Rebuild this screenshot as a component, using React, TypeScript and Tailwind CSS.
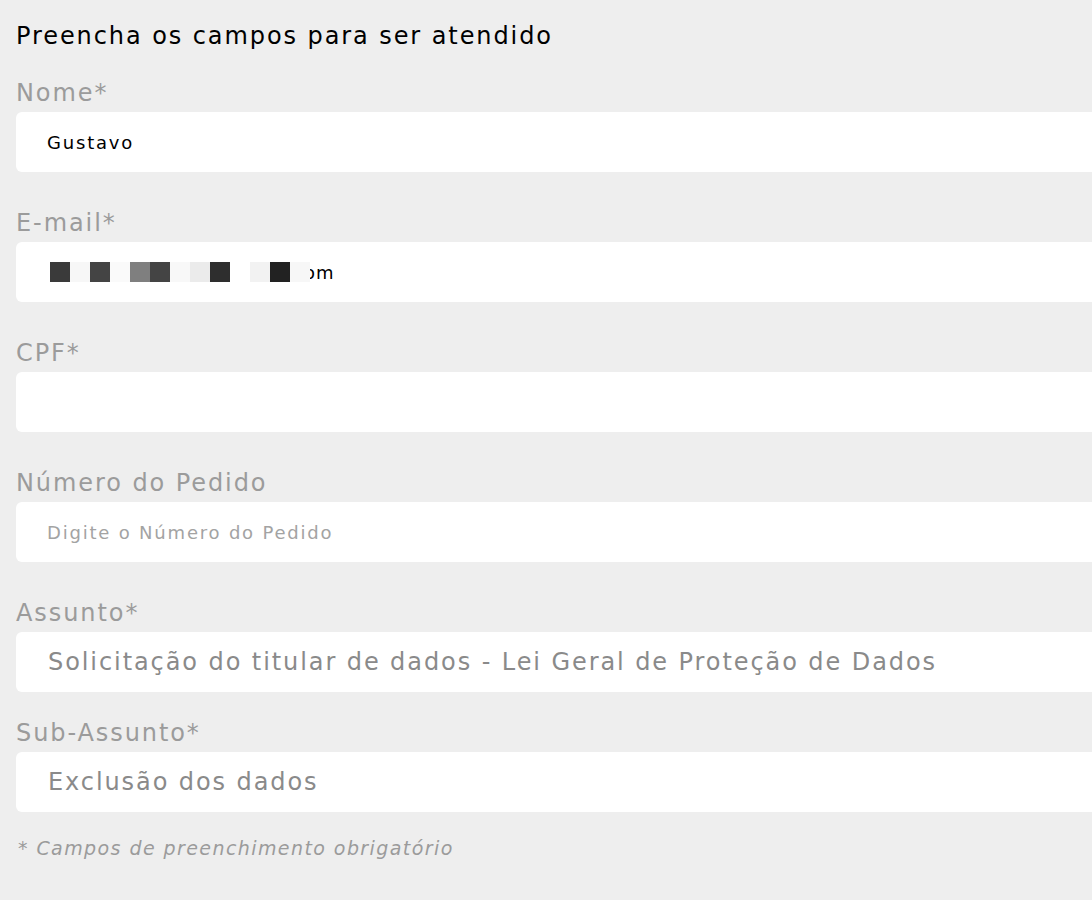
const font = { fontFamily: '"DejaVu Sans", "Liberation Sans", sans-serif' };

const emailBlocks = [
  '#3a3a3a', '#f7f7f7', '#444444', '#fafafa', '#7f7f7f', '#444444', '#f8f8f8',
  '#ebebeb', '#2e2e2e', '#ffffff', '#f2f2f2', '#222222', '#f7f7f7',
];

const Label = ({ children }: { children: React.ReactNode }) => (
  <label className="block text-[24px] leading-[27px] pb-[5px] tracking-[0.08em] text-[#9b9b9b]">
    {children}
  </label>
);

const Field = ({ children }: { children?: React.ReactNode }) => (
  <div className="h-[60px] bg-white rounded-md flex items-center">{children}</div>
);

export default function App() {
  return (
    <div className="min-h-screen w-full overflow-hidden bg-[#eeeeee]" style={font}>
      <form className="w-[1120px] pl-4 pt-[20px]">
        <h2 className="text-[24px] leading-[32px] tracking-[0.08em] text-black">
          Preencha os campos para ser atendido
        </h2>

        <div className="mt-[28px]">
          <Label>Nome*</Label>
          <Field>
            <span className="pl-[31px] text-[18px] tracking-[0.1em] text-black">Gustavo</span>
          </Field>
        </div>

        <div className="mt-[38px]">
          <Label>E-mail*</Label>
          <Field>
            <div className="flex items-center pl-[34px]">
              <div className="flex relative z-10">
                {emailBlocks.map((c, i) => (
                  <div key={i} className="w-[20px] h-[20px]" style={{ backgroundColor: c }} />
                ))}
              </div>
              <span className="-ml-[6px] text-[18px] tracking-[0.05em] text-black">om</span>
            </div>
          </Field>
        </div>

        <div className="mt-[38px]">
          <Label>CPF*</Label>
          <Field />
        </div>

        <div className="mt-[38px]">
          <Label>Número do Pedido</Label>
          <Field>
            <span className="pl-[31px] text-[18px] tracking-[0.1em] text-[#a3a3a3]">
              Digite o Número do Pedido
            </span>
          </Field>
        </div>

        <div className="mt-[38px]">
          <Label>Assunto*</Label>
          <Field>
            <span className="pl-[32px] text-[24px] tracking-[0.08em] text-[#8a8a8a]">
              Solicitação do titular de dados - Lei Geral de Proteção de Dados
            </span>
          </Field>
        </div>

        <div className="mt-[28px]">
          <Label>Sub-Assunto*</Label>
          <Field>
            <span className="pl-[32px] text-[24px] tracking-[0.08em] text-[#8a8a8a]">
              Exclusão dos dados
            </span>
          </Field>
        </div>

        <p className="mt-[22px] pl-[2px] text-[19px] italic tracking-[0.075em] text-[#9b9b9b]">
          * Campos de preenchimento obrigatório
        </p>
      </form>
    </div>
  );
}
